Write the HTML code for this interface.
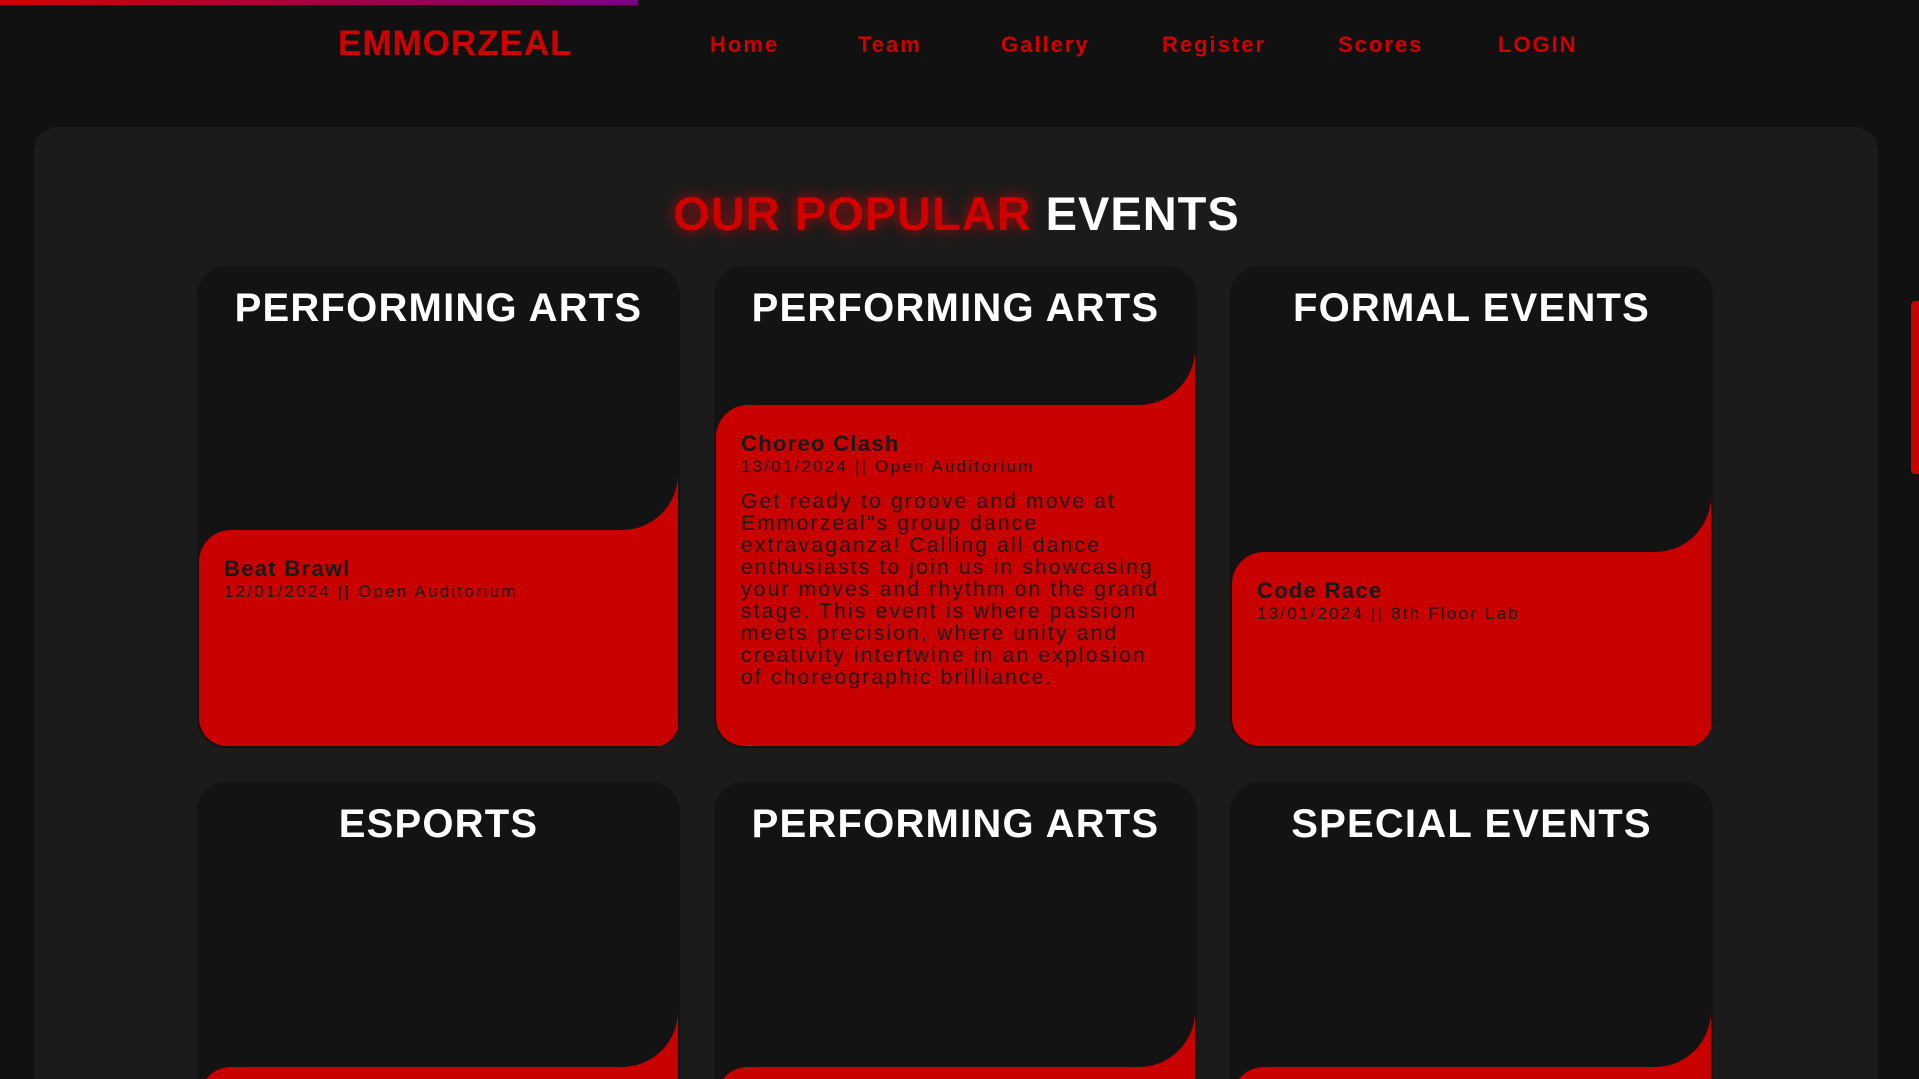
<!DOCTYPE html>
<html><head><meta charset="utf-8"><style>
*{margin:0;padding:0;box-sizing:border-box}
html,body{width:1919px;height:1079px;overflow:hidden}
body{background:#111;font-family:"Liberation Sans",sans-serif;position:relative}
.wrap{position:absolute;left:0;top:0;width:1919px;height:1079px;overflow:hidden}
.bar{position:absolute;left:0;top:0;width:638px;height:5px;background:linear-gradient(90deg,#d00000,#7a0080)}
.logo{position:absolute;left:338px;top:24px;font-size:35px;font-weight:bold;color:#d00000;letter-spacing:1px}
.nav{position:absolute;top:32px;font-size:22px;color:#d00000;letter-spacing:2px;font-weight:bold}
.panel{position:absolute;left:34px;top:127px;width:1844px;height:952px;background:#1b1b1b;border-radius:24px 24px 0 0}
.title{position:absolute;left:0;width:1913px;top:186px;text-align:center;font-size:47px;font-weight:bold;color:#fff;letter-spacing:1px}
.title span{color:#d00000;text-shadow:0 0 14px rgba(255,0,0,.7)}
.card{position:absolute;width:483px;height:482px;background:#131313;border-radius:30px;overflow:hidden}
.card.b{height:297px;border-radius:30px 30px 0 0}
.card h2{position:absolute;left:0;right:0;top:20px;text-align:center;color:#fff;font-size:40px;letter-spacing:1.2px;z-index:3}
.dark{position:absolute;left:0;top:0;right:2px;background:#131313;border-bottom-right-radius:56px;z-index:2}
.back{position:absolute;right:2px;width:80px;bottom:2px;background:#c80000;z-index:1}
.red{position:absolute;left:2px;right:2px;bottom:2px;background:#c80000;border-radius:32px 0 28px 28px;z-index:1;padding:26px 25px;color:#1a1a1a}
.b .red,.b .back{bottom:0}
.b .red{border-radius:32px 0 0 0}
.red b{display:block;font-size:22px;letter-spacing:1.3px}
.red .d{font-size:17px;letter-spacing:2.2px;margin-top:0px}
.red p{font-size:21px;letter-spacing:2.2px;line-height:22px;margin-top:14px;white-space:nowrap}
.sb{position:absolute;left:1911px;top:301px;width:8px;height:173px;background:#c80000;border-radius:4px 0 0 4px}
</style></head><body><div class="wrap">
<div class="bar"></div>
<div class="logo">EMMORZEAL</div>
<div class="nav" style="left:710px">Home</div>
<div class="nav" style="left:858px">Team</div>
<div class="nav" style="left:1001px">Gallery</div>
<div class="nav" style="left:1162px">Register</div>
<div class="nav" style="left:1338px">Scores</div>
<div class="nav" style="left:1498px">LOGIN</div>
<div class="panel"></div>
<div class="title"><span>OUR POPULAR</span> EVENTS</div>

<div class="card" style="left:197px;top:266px">
<h2>PERFORMING ARTS</h2>
<div class="dark" style="height:264px"></div>
<div class="back" style="top:200px"></div>
<div class="red" style="top:264px"><b>Beat Brawl</b><div class="d">12/01/2024 || Open Auditorium</div></div>
</div>

<div class="card" style="left:714px;top:266px">
<h2>PERFORMING ARTS</h2>
<div class="dark" style="height:139px"></div>
<div class="back" style="top:80px"></div>
<div class="red" style="top:139px"><b>Choreo Clash</b><div class="d">13/01/2024 || Open Auditorium</div>
<p>Get ready to groove and move at<br>Emmorzeal"s group dance<br>extravaganza! Calling all dance<br>enthusiasts to join us in showcasing<br>your moves and rhythm on the grand<br>stage. This event is where passion<br>meets precision, where unity and<br>creativity intertwine in an explosion<br>of choreographic brilliance.</p></div>
</div>

<div class="card" style="left:1230px;top:266px">
<h2>FORMAL EVENTS</h2>
<div class="dark" style="height:286px"></div>
<div class="back" style="top:220px"></div>
<div class="red" style="top:286px"><b>Code Race</b><div class="d">13/01/2024 || 8th Floor Lab</div></div>
</div>

<div class="card b" style="left:197px;top:782px">
<h2>ESPORTS</h2>
<div class="dark" style="height:285px"></div>
<div class="back" style="top:220px"></div>
<div class="red" style="top:285px"></div>
</div>
<div class="card b" style="left:714px;top:782px">
<h2>PERFORMING ARTS</h2>
<div class="dark" style="height:285px"></div>
<div class="back" style="top:220px"></div>
<div class="red" style="top:285px"></div>
</div>
<div class="card b" style="left:1230px;top:782px">
<h2>SPECIAL EVENTS</h2>
<div class="dark" style="height:285px"></div>
<div class="back" style="top:220px"></div>
<div class="red" style="top:285px"></div>
</div>
<div class="sb"></div>
</div></body></html>
